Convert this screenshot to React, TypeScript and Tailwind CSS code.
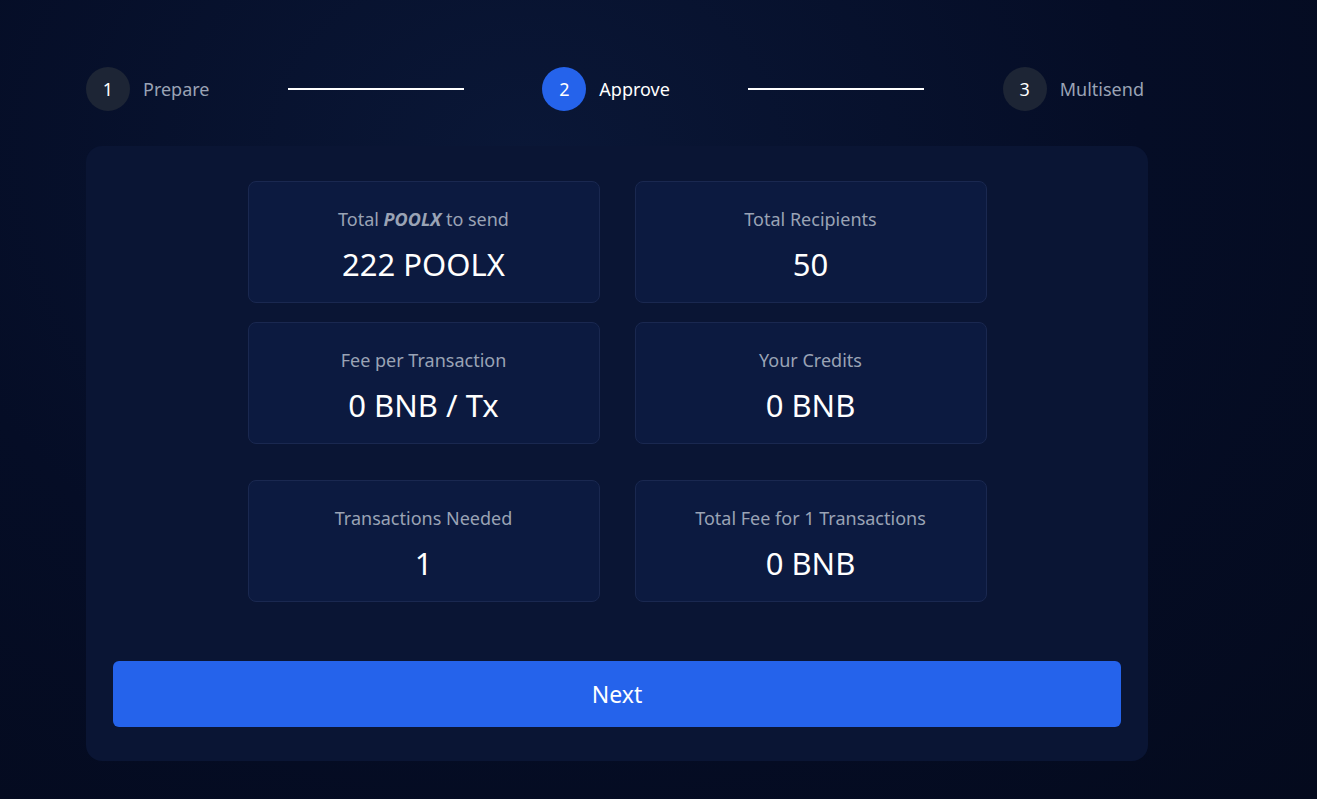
const steps = [
  { n: 1, label: "Prepare", active: false },
  { n: 2, label: "Approve", active: true },
  { n: 3, label: "Multisend", active: false },
];

function Stat({ label, value }: { label: React.ReactNode; value: string }) {
  return (
    <div className="flex h-[122px] flex-col items-center rounded-lg border border-[#1a2850] bg-[#0c1a40] pt-[25px]">
      <div className="text-[18px] leading-6 text-[#9aa3b5]">{label}</div>
      <div className="mt-[15px] text-[31px] leading-9 text-white">{value}</div>
    </div>
  );
}

export default function App() {
  return (
    <div
      className="min-h-[799px] w-full bg-[radial-gradient(ellipse_at_40%_20%,#0a1737_0%,#050d26_55%,#040a1d_100%)] pt-[67px] text-white"
      style={{ fontFamily: '"Noto Sans", "Open Sans", sans-serif' }}
    >
      <div className="ml-[86px] w-[1062px]">
        {/* stepper */}
        <div className="flex h-[44px] items-center justify-between pr-[4px]">
          {steps.map((s, i) => (
            <div key={s.n} className="contents">
              <div className="flex items-center gap-[13px]">
                <div
                  className={`flex h-[44px] w-[44px] items-center justify-center rounded-full text-[18px] ${
                    s.active ? "bg-[#2563eb] text-white" : "bg-[#1d2535] text-white"
                  }`}
                >
                  {s.n}
                </div>
                <span className={`text-[18px] ${s.active ? "text-white" : "text-[#9aa3b5]"}`}>{s.label}</span>
              </div>
              {i < steps.length - 1 && <div className="h-[2px] w-[176px] bg-white" />}
            </div>
          ))}
        </div>

        {/* panel */}
        <div className="mt-[35px] rounded-2xl bg-[#0a1534] px-[27px] pt-[35px] pb-[34px]">
          <div className="mx-auto grid w-[739px] grid-cols-2 gap-x-[35px] gap-y-[19px]">
            <Stat
              label={
                <>
                  Total <b className="italic font-bold">POOLX</b> to send
                </>
              }
              value="222 POOLX"
            />
            <Stat label="Total Recipients" value="50" />
            <Stat label="Fee per Transaction" value="0 BNB / Tx" />
            <Stat label="Your Credits" value="0 BNB" />
          </div>
          <div className="mx-auto mt-[36px] grid w-[739px] grid-cols-2 gap-x-[35px]">
            <Stat label="Transactions Needed" value="1" />
            <Stat label="Total Fee for 1 Transactions" value="0 BNB" />
          </div>
          <button className="mt-[59px] flex h-[66px] w-full items-center justify-center rounded-md bg-[#2563eb] text-[23px] text-white">
            Next
          </button>
        </div>
      </div>
    </div>
  );
}
